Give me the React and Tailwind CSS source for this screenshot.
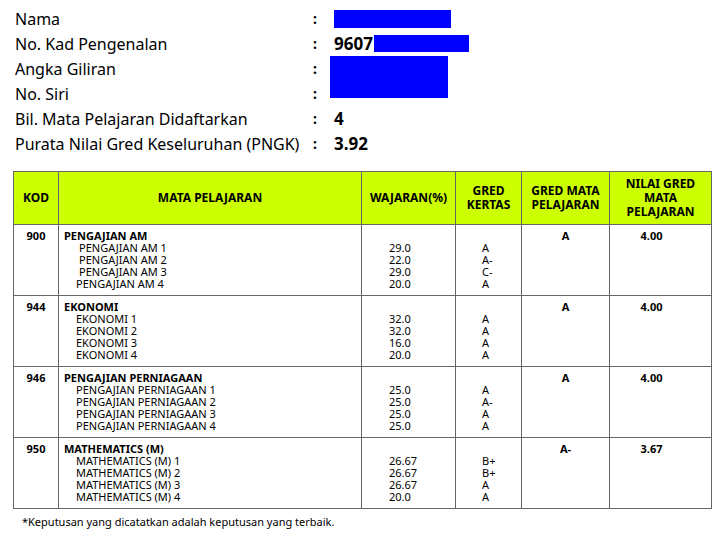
import React from 'react';

const info = [
  ['Nama', 'box1'],
  ['No. Kad Pengenalan', 'ic'],
  ['Angka Giliran', 'box2'],
  ['No. Siri', null],
  ['Bil. Mata Pelajaran Didaftarkan', '4'],
  ['Purata Nilai Gred Keseluruhan (PNGK)', '3.92'],
];

const subjects = [
  { kod: '900', name: 'PENGAJIAN AM', gred: 'A', nilai: '4.00', papers: [
    ['PENGAJIAN AM 1', '29.0', 'A', 'pl-[15px]'], ['PENGAJIAN AM 2', '22.0', 'A-', 'pl-[15px]'],
    ['PENGAJIAN AM 3', '29.0', 'C-', 'pl-[15px]'], ['PENGAJIAN AM 4', '20.0', 'A', 'pl-[12px]']] },
  { kod: '944', name: 'EKONOMI', gred: 'A', nilai: '4.00', papers: [
    ['EKONOMI 1', '32.0', 'A'], ['EKONOMI 2', '32.0', 'A'], ['EKONOMI 3', '16.0', 'A'], ['EKONOMI 4', '20.0', 'A']] },
  { kod: '946', name: 'PENGAJIAN PERNIAGAAN', gred: 'A', nilai: '4.00', papers: [
    ['PENGAJIAN PERNIAGAAN 1', '25.0', 'A'], ['PENGAJIAN PERNIAGAAN 2', '25.0', 'A-'],
    ['PENGAJIAN PERNIAGAAN 3', '25.0', 'A'], ['PENGAJIAN PERNIAGAAN 4', '25.0', 'A']] },
  { kod: '950', name: 'MATHEMATICS (M)', gred: 'A-', nilai: '3.67', papers: [
    ['MATHEMATICS (M) 1', '26.67', 'B+'], ['MATHEMATICS (M) 2', '26.67', 'B+'],
    ['MATHEMATICS (M) 3', '26.67', 'A'], ['MATHEMATICS (M) 4', '20.0', 'A']] },
];

const th = 'border border-[#666] font-bold text-[12px] leading-[14px] text-center align-middle';
const td = 'border border-[#666] align-top text-[11px] leading-[12px]';

export default function App() {
  return (
    <div className="bg-white w-[726px] h-[538px] font-['Liberation_Sans'] text-black relative">
      <div className="pt-[6px] pl-[15px]">
        {info.map(([label, v]) => (
          <div key={label} className="flex h-[25px] items-center text-[16px]">
            <div className="w-[298px]">{label}</div>
            <div className="w-[21px] font-bold text-[14px]">:</div>
            <div className="font-['Liberation_Serif'] font-bold text-[17px] flex items-center">
              {v === 'box1' && <div className="w-[117px] h-[18px] bg-[#0000ff]" />}
              {v === 'ic' && (<><span>9607</span><div className="w-[95px] h-[17px] bg-[#0000ff] ml-[1px]" /></>)}
              {v === 'box2' && <div className="w-[118px] h-[42px] bg-[#0000ff] mt-[17px] -ml-[4px]" />}
              {(v === '4' || v === '3.92') && v}
            </div>
          </div>
        ))}
      </div>
      <table className="absolute left-[13px] top-[171px] w-[699px] border-collapse border border-[#666]">
        <thead>
          <tr className="bg-[#ccff00] h-[53px]">
            <th className={`${th} w-[45px]`}>KOD</th>
            <th className={`${th} w-[303px]`}>MATA PELAJARAN</th>
            <th className={`${th} w-[94px]`}>WAJARAN(%)</th>
            <th className={`${th} w-[66px]`}>GRED<br />KERTAS</th>
            <th className={`${th} w-[88px]`}>GRED MATA<br />PELAJARAN</th>
            <th className={th}>NILAI GRED<br />MATA<br />PELAJARAN</th>
          </tr>
        </thead>
        <tbody>
          {subjects.map(s => (
            <tr key={s.kod} className="h-[71px]">
              <td className={`${td} font-bold text-center pt-[5px]`}>{s.kod}</td>
              <td className={`${td} pt-[5px] pl-[5px]`}>
                <div className="font-bold">{s.name}</div>
                {s.papers.map(p => <div key={p[0]} className={p[3] || 'pl-[12px]'}>{p[0]}</div>)}
              </td>
              <td className={`${td} pt-[17px] pl-[27px]`}>
                {s.papers.map(p => <div key={p[0]}>{p[1]}</div>)}
              </td>
              <td className={`${td} pt-[17px] pl-[26px]`}>
                {s.papers.map(p => <div key={p[0]}>{p[2]}</div>)}
              </td>
              <td className={`${td} font-bold text-center pt-[5px]`}>{s.gred}</td>
              <td className={`${td} font-bold text-center pt-[5px] pr-[18px]`}>{s.nilai}</td>
            </tr>
          ))}
        </tbody>
      </table>
      <div className="absolute left-[22px] top-[514px] text-[11px]">*Keputusan yang dicatatkan adalah keputusan yang terbaik.</div>
    </div>
  );
}
